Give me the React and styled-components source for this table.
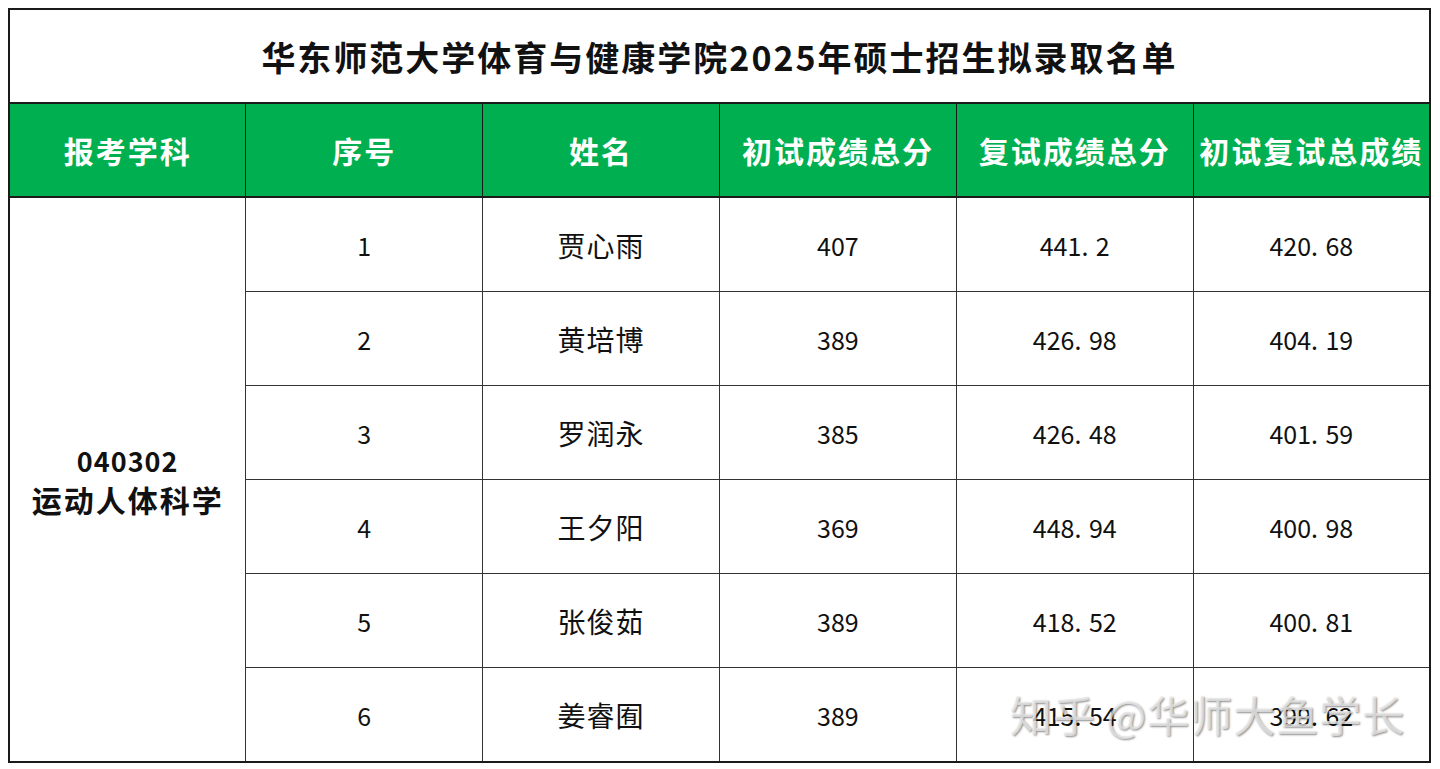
import React from "react";
import styled, { createGlobalStyle } from "styled-components";

const GlobalStyle = createGlobalStyle`
  html, body {
    margin: 0;
    background: #ffffff;
  }
  body {
    padding: 8px;
    font-family: "Noto Sans CJK SC", "Noto Sans", sans-serif;
  }
`;

const Wrap = styled.div`
  position: relative;
  width: 1423px;
`;

const Table = styled.table`
  width: 1423px;
  border-collapse: collapse;
  table-layout: fixed;
  border: 2px solid #1a1a1a;
`;

const TitleCell = styled.th`
  height: 92px;
  padding: 0;
  font-size: 34px;
  font-weight: 700;
  color: #111;
  border: 2px solid #1a1a1a;
  text-align: center;
  letter-spacing: 2px;
`;

const HeadCell = styled.th`
  height: 92px;
  padding: 0;
  background: #00b050;
  color: #ffffff;
  font-size: 30px;
  font-weight: 700;
  border: 1px solid #1a1a1a;
  border-bottom: 2px solid #1a1a1a;
  text-align: center;
  letter-spacing: 2px;
  white-space: nowrap;
`;

const Cell = styled.td`
  height: 93px;
  padding: 0;
  font-size: ${(p) => (p.$wide ? "28px" : "25px")};
  letter-spacing: ${(p) => (p.$wide ? "1px" : "0")};
  color: #111;
  border: 1px solid #333;
  text-align: center;
  vertical-align: middle;
`;

const SubjectCell = styled.td`
  padding: 0;
  font-size: 30px;
  font-weight: 700;
  line-height: 38px;
  letter-spacing: 2px;
  color: #111;
  border: 1px solid #333;
  text-align: center;
  vertical-align: middle;
`;

const Code = styled.div`
  font-size: 27px;
  letter-spacing: 1px;
`;

const Dot = styled.span`
  margin-right: 0.3em;
`;

const Watermark = styled.div`
  position: absolute;
  left: 1002px;
  top: 675px;
  font-size: 42px;
  letter-spacing: 1px;
  color: rgba(235, 235, 235, 0.75);
  text-shadow: 1px 1px 2px rgba(0, 0, 0, 0.45);
  white-space: nowrap;
  pointer-events: none;
`;

const rows = [
  ["1", "贾心雨", "407", "441.2", "420.68"],
  ["2", "黄培博", "389", "426.98", "404.19"],
  ["3", "罗润永", "385", "426.48", "401.59"],
  ["4", "王夕阳", "369", "448.94", "400.98"],
  ["5", "张俊茹", "389", "418.52", "400.81"],
  ["6", "姜睿囿", "389", "415.54", "399.62"],
];

const heads = ["报考学科", "序号", "姓名", "初试成绩总分", "复试成绩总分", "初试复试总成绩"];

const Score = ({ value }) => {
  const [a, b] = value.split(".");
  if (b === undefined) return value;
  return (
    <>
      {a}
      <Dot>.</Dot>
      {b}
    </>
  );
};

const App = () => {
  return (
    <Wrap>
      <GlobalStyle />
      <Table>
        <thead>
          <tr>
            <TitleCell colSpan={6}>华东师范大学体育与健康学院2025年硕士招生拟录取名单</TitleCell>
          </tr>
          <tr>
            {heads.map((h) => (
              <HeadCell key={h}>{h}</HeadCell>
            ))}
          </tr>
        </thead>
        <tbody>
          {rows.map((r, i) => (
            <tr key={r[0]}>
              {i === 0 && (
                <SubjectCell rowSpan={6}>
                  <Code>040302</Code>
                  运动人体科学
                </SubjectCell>
              )}
              <Cell>{r[0]}</Cell>
              <Cell $wide>{r[1]}</Cell>
              <Cell>{r[2]}</Cell>
              <Cell>
                <Score value={r[3]} />
              </Cell>
              <Cell>
                <Score value={r[4]} />
              </Cell>
            </tr>
          ))}
        </tbody>
      </Table>
      <Watermark>知乎 @华师大鱼学长</Watermark>
    </Wrap>
  );
};

export default App;
